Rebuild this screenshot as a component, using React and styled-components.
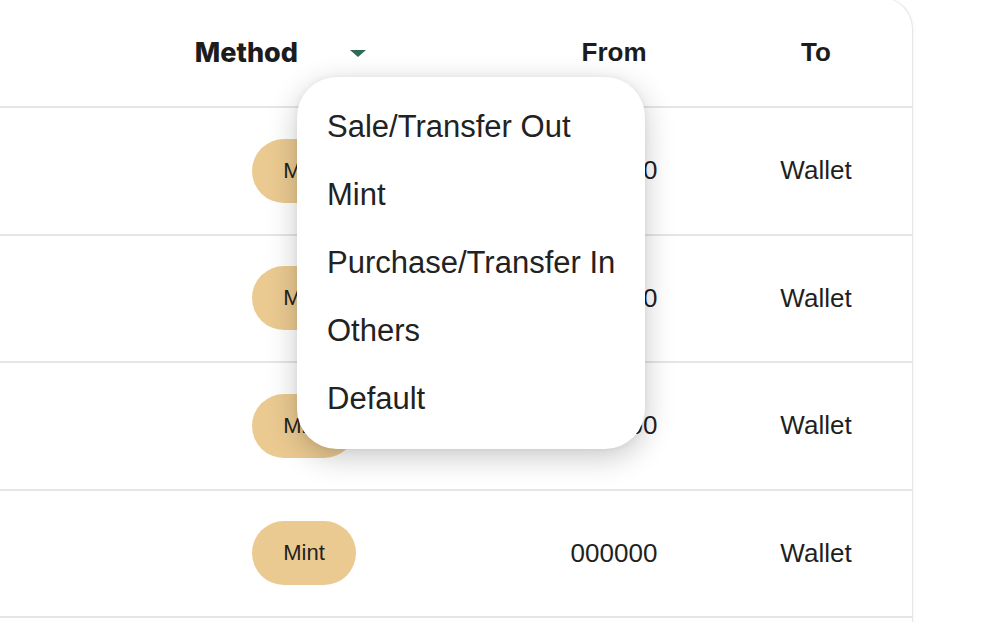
import React from "react";
import styled, { createGlobalStyle } from "styled-components";

const GlobalStyle = createGlobalStyle`
  html, body {
    margin: 0;
    padding: 0;
    background: #ffffff;
    overflow: hidden;
  }
  body {
    font-family: "Liberation Sans", Arial, sans-serif;
    color: #1f1f1f;
  }
`;

const Page = styled.div`
  width: 1005px;
  height: 622px;
  overflow: hidden;
`;

const Card = styled.div`
  position: relative;
  width: 912px;
  margin-top: -3px;
  background: #ffffff;
  border-right: 1px solid #e6e6e6;
  border-top: 1px solid #ededed;
  border-top-right-radius: 32px;
  box-shadow: 1px 0 3px rgba(0, 0, 0, 0.04);
`;

const Row = styled.div`
  display: grid;
  grid-template-columns: 252px 256px 212px 192px;
  align-items: center;
  height: ${p => p.$height}px;
  border-bottom: 2px solid #e5e5e5;
`;

const HeadMethod = styled.div`
  grid-column: 1 / 3;
  justify-self: end;
  display: flex;
  align-items: center;
  gap: 52px;
  padding-right: 142px;
  font-family: "Inter", sans-serif;
  font-weight: 800;
  font-size: 27px;
  color: #1c1c1c;
`;

const Caret = styled.span`
  width: 0;
  height: 0;
  border-left: 8px solid transparent;
  border-right: 8px solid transparent;
  border-top: 7px solid #2e6a54;
  margin-top: 2px;
`;

const HeadCell = styled.div`
  text-align: center;
  font-weight: 700;
  font-size: 26px;
  color: #1c1c1c;
`;

const Cell = styled.div`
  text-align: center;
  font-size: 26px;
  color: #1f1f1f;
`;

const PillCell = styled.div`
  grid-column: 2;
  display: flex;
`;

const Pill = styled.span`
  display: inline-flex;
  align-items: center;
  justify-content: center;
  width: 104px;
  height: 64px;
  border-radius: 32px;
  background: #ebca91;
  font-size: 22px;
  color: #222;
`;

const Menu = styled.ul`
  position: absolute;
  left: 297px;
  top: 79px;
  width: 348px;
  margin: 0;
  padding: 16px 0;
  list-style: none;
  background: #ffffff;
  border-radius: 40px;
  box-shadow: 0 8px 30px rgba(0, 0, 0, 0.22), 0 0 6px rgba(0, 0, 0, 0.05);
`;

const MenuItem = styled.li`
  padding-left: 30px;
  height: 68px;
  line-height: 68px;
  font-size: 31px;
  color: #222;
  white-space: nowrap;
`;

const rows = [1, 2, 3, 4];
const options = ["Sale/Transfer Out", "Mint", "Purchase/Transfer In", "Others", "Default"];

export default function App() {
  return (
    <Page>
      <GlobalStyle />
      <Card>
        <Row $height={108}>
          <HeadMethod>
            Method
            <Caret />
          </HeadMethod>
          <HeadCell>From</HeadCell>
          <HeadCell>To</HeadCell>
        </Row>
        {rows.map(r => (
          <Row key={r} $height={125.5}>
            <PillCell>
              <Pill>Mint</Pill>
            </PillCell>
            <Cell>000000</Cell>
            <Cell>Wallet</Cell>
          </Row>
        ))}
        <Row $height={40} />
        <Menu>
          {options.map(o => (
            <MenuItem key={o}>{o}</MenuItem>
          ))}
        </Menu>
      </Card>
    </Page>
  );
}
